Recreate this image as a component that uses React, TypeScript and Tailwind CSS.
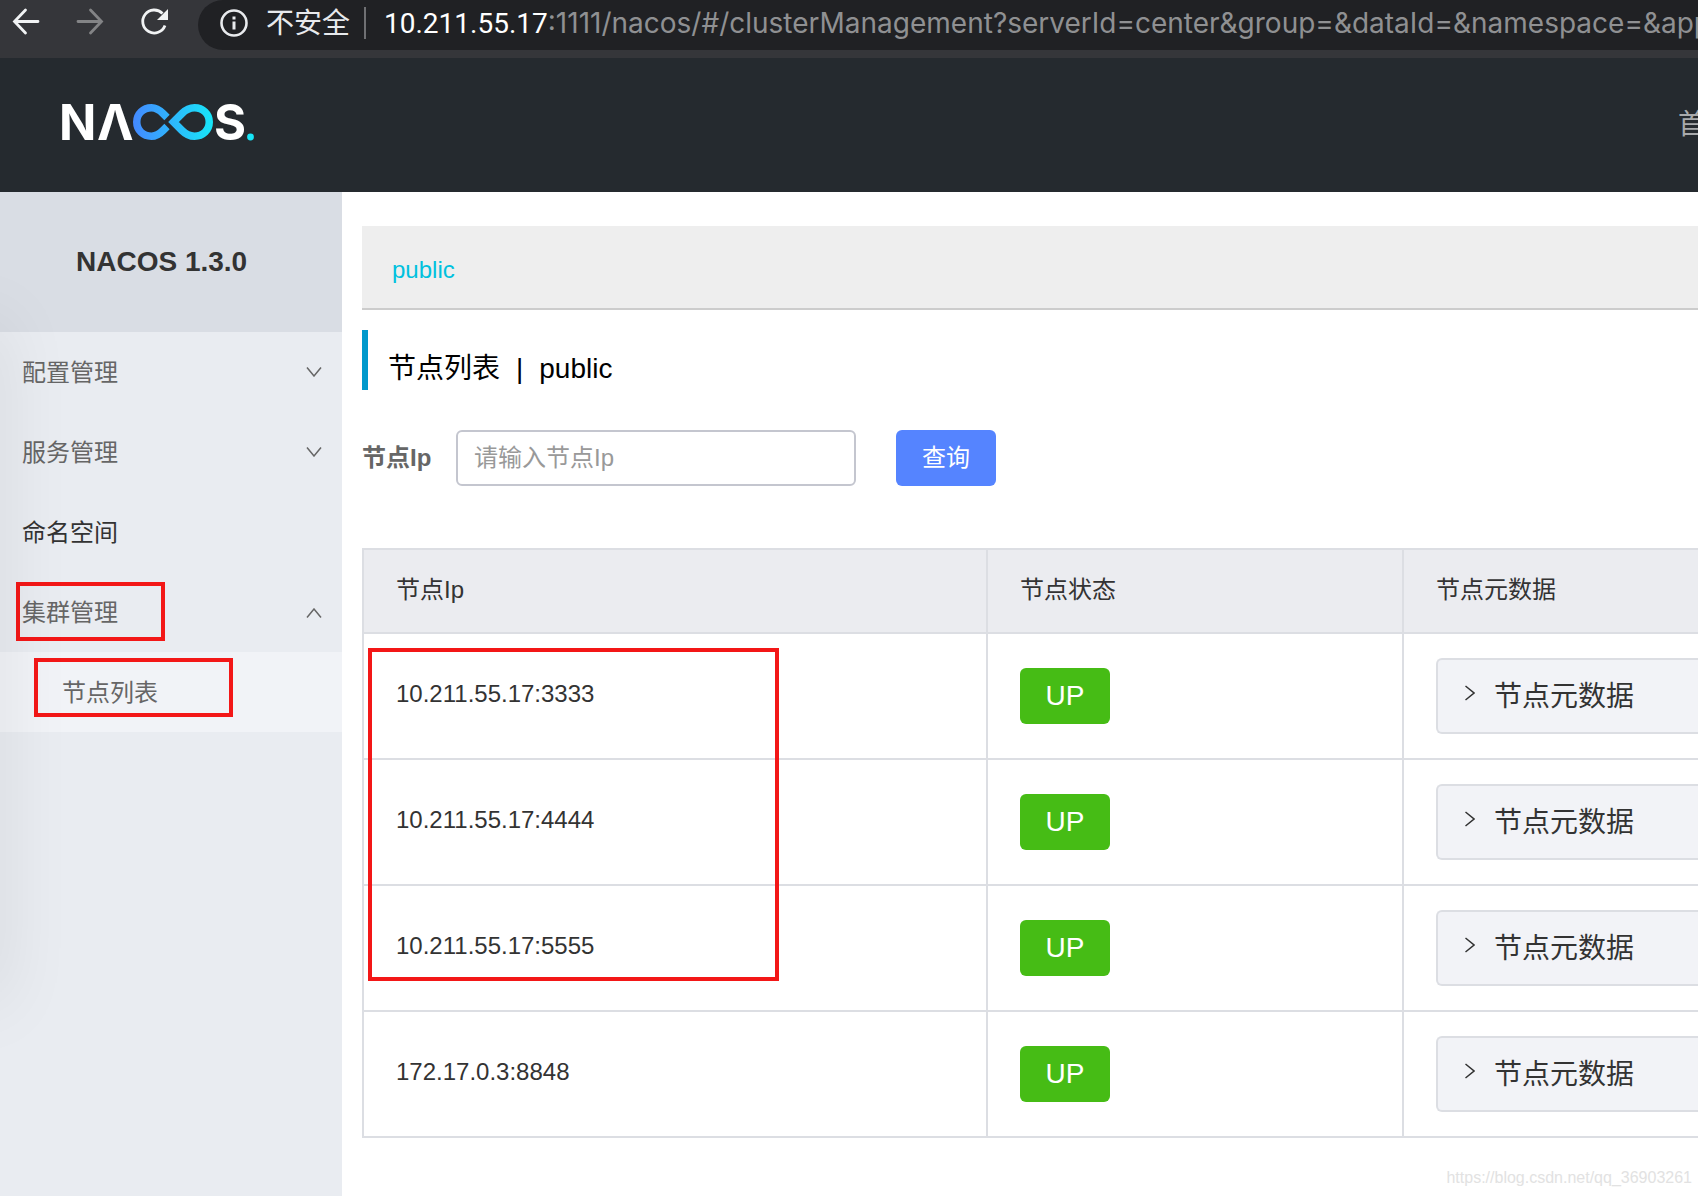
import { useState } from 'react';

const menuItems = [
  { label: '配置管理', expandable: true },
  { label: '服务管理', expandable: true },
  { label: '命名空间', expandable: false },
];

const nodes = [
  { ip: '10.211.55.17:3333', state: 'UP' },
  { ip: '10.211.55.17:4444', state: 'UP' },
  { ip: '10.211.55.17:5555', state: 'UP' },
  { ip: '172.17.0.3:8848', state: 'UP' },
];

function Chevron({ className }: { className?: string }) {
  return (
    <svg
      viewBox="0 0 16 10"
      className={`w-4 h-[10px] fill-none stroke-current ${className ?? ''}`}
      strokeWidth="1.5"
    >
      <path d="M1 .5 L8 9 L15 .5" />
    </svg>
  );
}

function Logo() {
  return (
    <svg width="206" height="76" viewBox="56 84 206 76" role="img" aria-label="Nacos">
      <defs>
        <linearGradient id="loop" gradientUnits="userSpaceOnUse" x1="133" y1="0" x2="213" y2="0">
          <stop offset="0" stopColor="#4489ff" />
          <stop offset="1" stopColor="#17e6f8" />
        </linearGradient>
      </defs>
      <g fill="#fff" fontFamily="Inter, sans-serif" fontWeight="700" fontSize="49">
        <text x="59" y="140">N</text>
        <text x="97" y="140">Λ</text>
        <text x="214" y="140">S</text>
      </g>
      <g fill="none" stroke="url(#loop)" strokeWidth="7.500">
        <path d="M167 117.500 L163 113.500 C159.500 110 156 107.750 151.500 107.750 C143 107.750 136.750 114 136.750 122 C136.750 130 143 136.250 151.500 136.250 C156 136.250 159.500 134 163 130.500 L167 126.500" />
        <path d="M173.500 122 L182 113.500 C186 109.500 190 107.750 194.500 107.750 C203 107.750 209.250 114 209.250 122 C209.250 130 203 136.250 194.500 136.250 C190 136.250 186 134.500 182 130.500 Z" />
      </g>
      <circle cx="250.500" cy="137" r="3.400" fill="#17e6f8" />
    </svg>
  );
}

function BrowserBar() {
  return (
    <div className="h-[58px] bg-[#35363a] flex items-start overflow-hidden">
      <div className="h-[50px] w-[198px] shrink-0 flex items-start pt-2 pl-3 gap-9">
        <button aria-label="Back" className="text-[#f1f3f4]">
          <svg width="28" height="28" viewBox="0 0 28 28" fill="none" stroke="currentColor" strokeWidth="2.800" strokeLinecap="round">
            <path d="M26 13.500H3M13.500 2L2.500 13.500L13.500 25" />
          </svg>
        </button>
        <button aria-label="Forward" className="text-[#838486]">
          <svg width="28" height="28" viewBox="0 0 28 28" fill="none" stroke="currentColor" strokeWidth="2.800" strokeLinecap="round">
            <path d="M2 13.500H25M14.500 2L25.500 13.500L14.500 25" />
          </svg>
        </button>
        <button aria-label="Reload" className="text-[#f1f3f4]">
          <svg width="28" height="28" viewBox="0 0 28 28" fill="none" stroke="currentColor" strokeWidth="2.800">
            <path d="M22.500 5.500A11.500 11.500 0 1 0 25 17.500" />
            <path d="M28 1V12H17Z" fill="currentColor" stroke="none" />
          </svg>
        </button>
      </div>
      <div className="flex-1 min-w-0 h-[50px] bg-[#202124] rounded-bl-[26px] rounded-tl-[26px] flex items-center pl-[22px] pb-1 overflow-hidden whitespace-nowrap text-[28px] leading-9 font-[Inter,'Noto_Sans_CJK_SC',sans-serif]">
        <svg width="28" height="28" viewBox="0 0 28 28" className="shrink-0" fill="none" stroke="#e8eaed" strokeWidth="2.600">
          <circle cx="14" cy="14" r="12.500" />
          <path d="M14 12.500V20.500M14 7.500V10.500" strokeWidth="3" />
        </svg>
        <span className="ml-[18px] text-[#e8eaed]">不安全</span>
        <span className="ml-[14px] mr-[18px] w-[2px] h-8 shrink-0 bg-[#6f7073]" />
        <span className="text-[#8f9092]">
          <span className="text-white font-[Roboto,sans-serif]">10.211.55.17</span>
          :1111/nacos/#/clusterManagement?serverId=center&amp;group=&amp;dataId=&amp;namespace=&amp;app
        </span>
      </div>
    </div>
  );
}

function Sidebar() {
  return (
    <aside className="relative w-[342px] shrink-0 bg-[#e9ecf1] overflow-hidden text-[24px] text-[#666]">
      <h1 className="h-[140px] bg-[#d9dde4] text-[28px] leading-[140px] pl-[76px] font-bold text-[#333]">
        NACOS 1.3.0
      </h1>
      <ul>
        {menuItems.map((item) => (
          <li key={item.label}>
            <a
              href="#"
              className={`h-20 flex items-center justify-between pt-[2px] pl-[22px] pr-5 ${
                item.expandable ? '' : 'text-[#333]'
              }`}
            >
              <span>{item.label}</span>
              {item.expandable && <Chevron className="mb-[2px]" />}
            </a>
          </li>
        ))}
        <li>
          <a href="#" className="relative h-20 flex items-center justify-between pt-[2px] pl-[22px] pr-5">
            <span>集群管理</span>
            <Chevron className="rotate-180" />
            <span className="absolute left-4 top-[10px] w-[149px] h-[59px] border-4 border-[#f31717]" />
          </a>
          <a href="#" className="relative h-20 flex items-center pt-[2px] pl-[62px] bg-[#f1f3f7]">
            <span>节点列表</span>
            <span className="absolute left-[34px] top-[6px] w-[199px] h-[59px] border-4 border-[#f31717]" />
          </a>
        </li>
      </ul>
      {/* soft shadow along the window edge */}
      <div className="absolute -left-10 top-[130px] w-10 h-[680px] shadow-[0_0_70px_rgba(0,0,0,0.1)] pointer-events-none" />
    </aside>
  );
}

export default function App() {
  const [ip, setIp] = useState('');

  return (
    <div className="min-h-screen flex flex-col bg-white overflow-hidden text-[#333] font-['Liberation_Sans','Noto_Sans_CJK_SC',sans-serif]">
      <BrowserBar />

      <header className="h-[134px] bg-[#252a2f] flex items-center justify-between pl-14 overflow-hidden">
        <div className="pb-[6px]">
          <Logo />
        </div>
        <nav className="w-5 overflow-hidden whitespace-nowrap text-[28px] text-[#a8aaac]">
          <a href="#">首</a>
        </nav>
      </header>

      <div className="flex-1 flex">
        <Sidebar />

        <main className="relative flex-1 min-w-0 pl-5 pt-[34px]">
          <div className="h-[84px] bg-[#eee] border-b-2 border-[#ccc] flex items-center pl-[30px] pt-[6px] text-[24px]">
            <a href="#" className="text-[#00c1de]">public</a>
          </div>

          <h2 className="mt-5 h-[60px] border-l-[6px] border-[#09c] pl-5 pt-[18px] flex items-center text-[28px] text-black whitespace-pre">
            <span>节点列表</span>
            <span className="mx-4">|</span>
            <span>public</span>
          </h2>

          <form className="mt-10 flex items-center text-[24px]" onSubmit={(e) => e.preventDefault()}>
            <label htmlFor="node-ip" className="w-[94px] font-bold text-[#666]">节点Ip</label>
            <input
              id="node-ip"
              value={ip}
              onChange={(e) => setIp(e.target.value)}
              placeholder="请输入节点Ip"
              className="w-[400px] h-14 px-4 rounded-md border-2 border-[#c4c6cf] placeholder:text-[#999]"
            />
            <button className="ml-10 w-[100px] h-14 rounded-md bg-[#5584ff] text-white">查询</button>
          </form>

          <table className="mt-[62px] w-full table-fixed border-separate border-spacing-0 text-[24px] text-left">
            <thead>
              <tr className="h-[86px] bg-[#ebecf0] [&>th]:border-l-2 [&>th]:border-y-2 [&>th]:border-[#dcdee3] [&>th]:px-8 [&>th]:pb-[2px] [&>th]:font-normal">
                <th className="w-[624px]">节点Ip</th>
                <th className="w-[416px]">节点状态</th>
                <th>节点元数据</th>
              </tr>
            </thead>
            <tbody>
              {nodes.map((node) => (
                <tr key={node.ip} className="h-[126px] [&>td]:border-l-2 [&>td]:border-b-2 [&>td]:border-[#dcdee3] [&>td]:pl-8">
                  <td className="pb-1">{node.ip}</td>
                  <td>
                    <button className="block w-[90px] h-14 rounded-md bg-[#46bc15] text-white text-[28px]">
                      {node.state}
                    </button>
                  </td>
                  <td>
                    <button className="w-full h-[76px] flex items-center pl-6 border-2 border-r-0 border-[#dcdee3] rounded-l-md bg-[#f2f3f7] text-[28px] whitespace-nowrap">
                      <Chevron className="-rotate-90 mb-[6px]" />
                      <span className="ml-4 pt-[2px]">节点元数据</span>
                    </button>
                  </td>
                </tr>
              ))}
            </tbody>
          </table>
          <div className="absolute left-[26px] top-[456px] w-[411px] h-[333px] border-4 border-[#f31717] pointer-events-none" />

          <p className="absolute right-[6px] bottom-2 text-[16px] leading-5 text-[#e2e2e2]">
            https://blog.csdn.net/qq_36903261
          </p>
        </main>
      </div>
    </div>
  );
}
